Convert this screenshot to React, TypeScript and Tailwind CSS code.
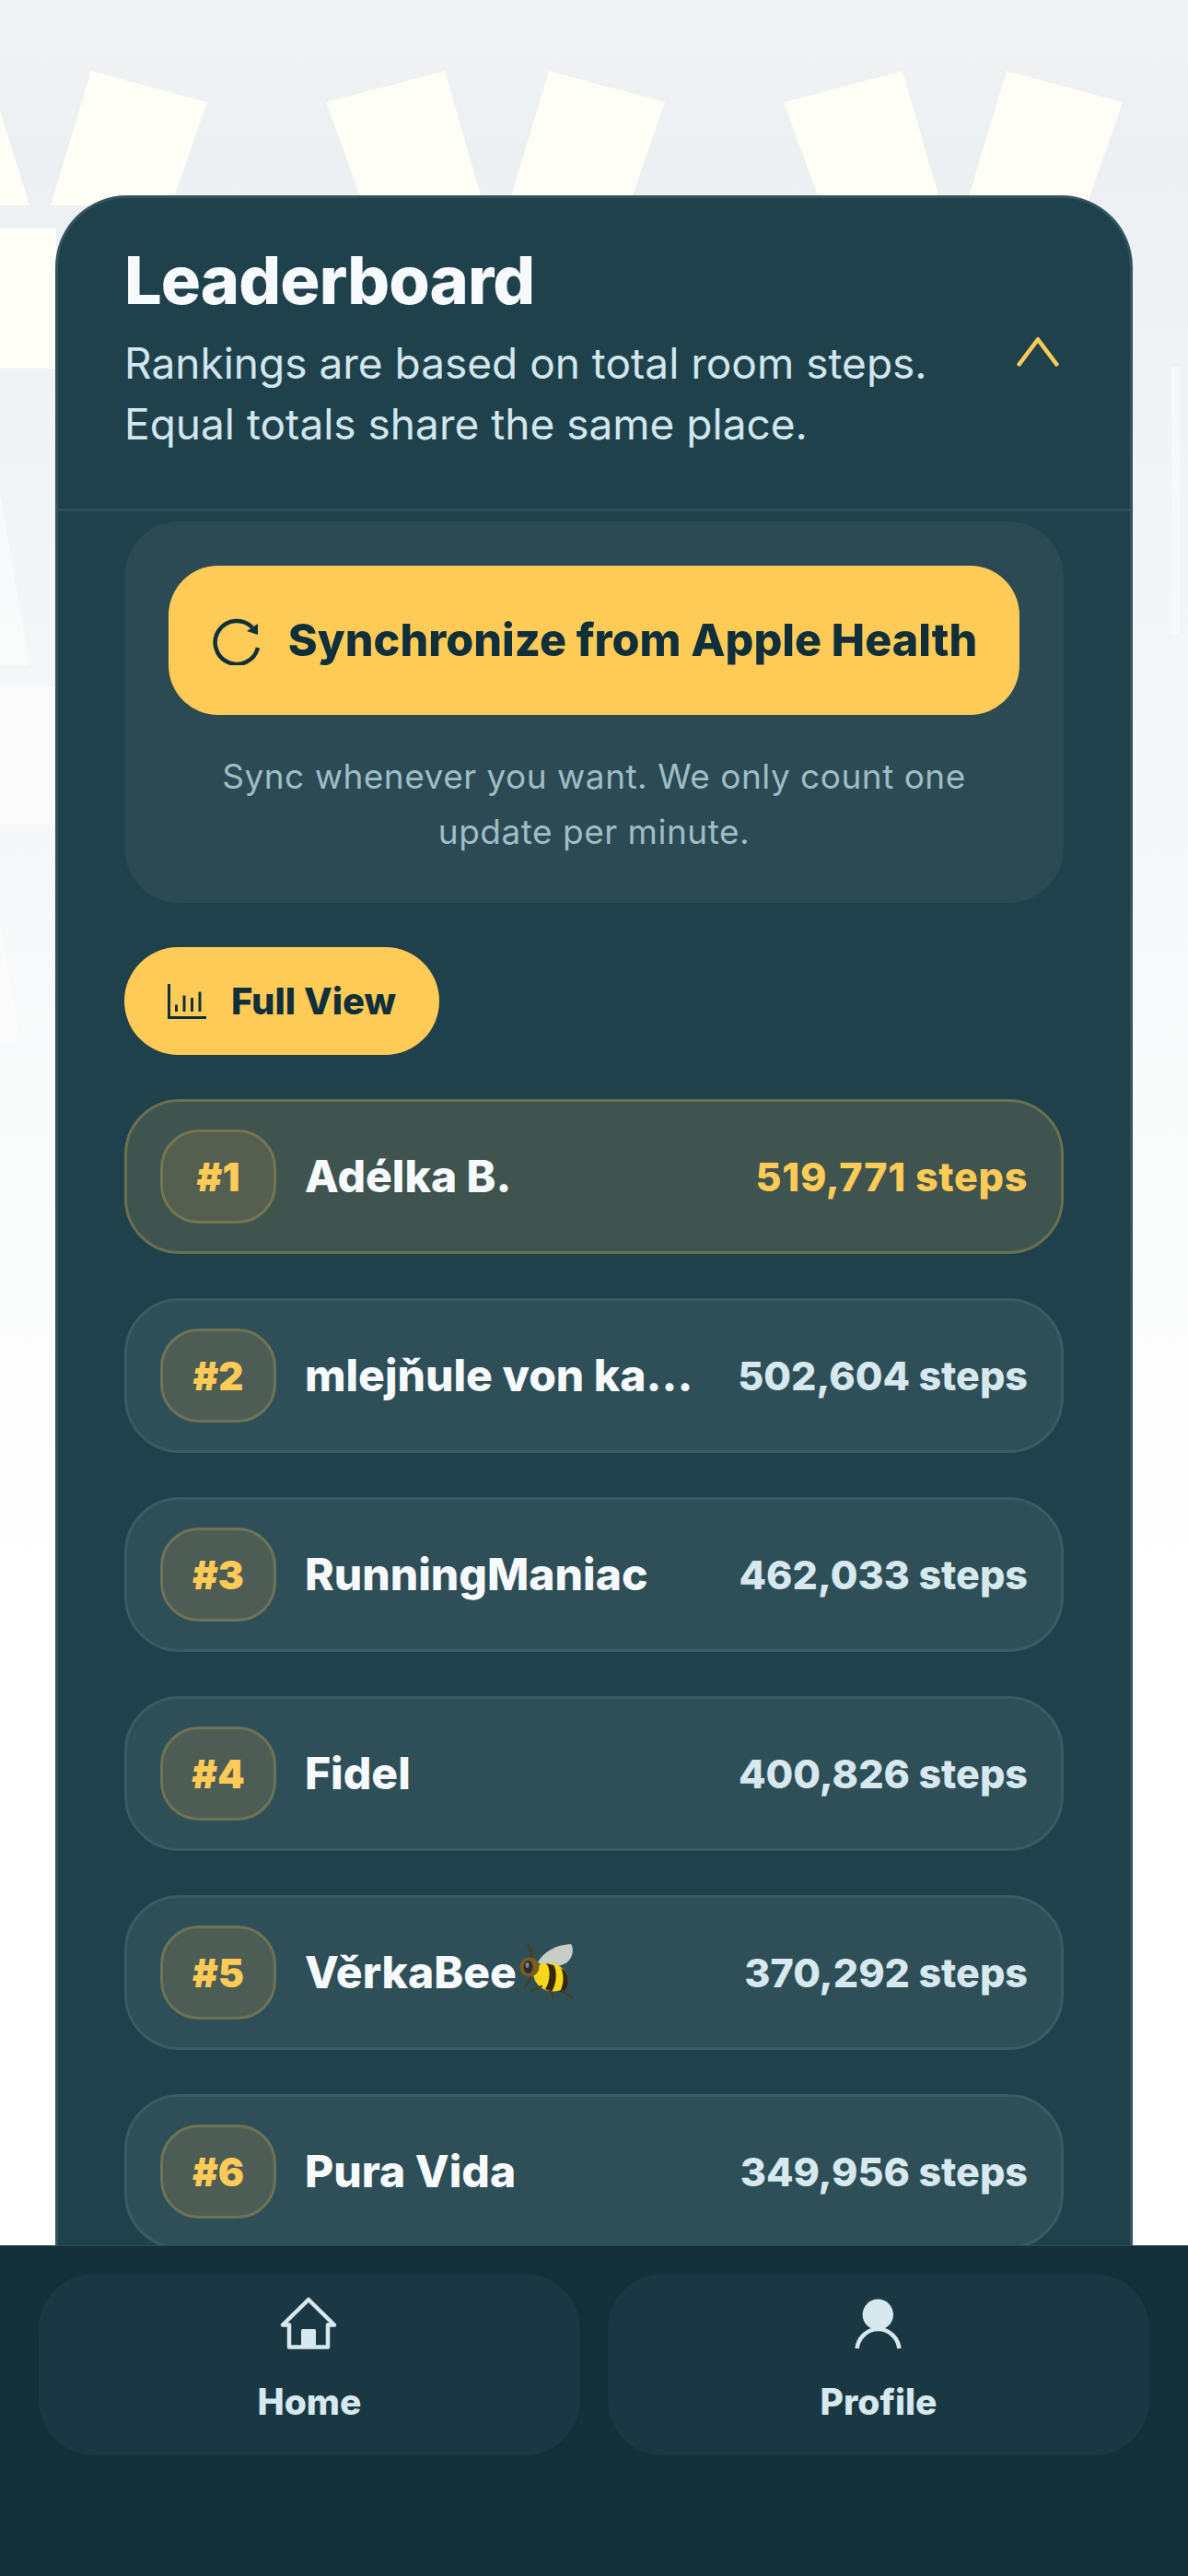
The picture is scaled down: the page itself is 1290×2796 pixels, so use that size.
import React from 'react'

interface Entry {
  rank: number;
  name: string;
  steps: string;
  bee?: boolean;
}

const entries: Entry[] = [
  { rank: 1, name: 'Adélka B.', steps: '519,771 steps' },
  { rank: 2, name: 'mlejňule von ka...', steps: '502,604 steps' },
  { rank: 3, name: 'RunningManiac', steps: '462,033 steps' },
  { rank: 4, name: 'Fidel', steps: '400,826 steps' },
  { rank: 5, name: 'VěrkaBee', steps: '370,292 steps', bee: true },
  { rank: 6, name: 'Pura Vida', steps: '349,956 steps' },
]

// page backdrop: pale pennants that fade out toward the bottom
const Backdrop = () => {
  const offsets = [0, 497, 994]
  return (
    <svg className="absolute inset-0" width="1290" height="2796" viewBox="0 0 1290 2796">
      <g fill="#fffef6">
        {offsets.map((dx) => (
          <g key={dx} transform={`translate(${dx} 0)`}>
            <polygon points="99,77 225,111 186,223 55,223" />
            <polygon points="354,111 483,77 525,223 395,223" />
          </g>
        ))}
        <polygon points="0,120 32,223 0,223" />
        <rect x="0" y="248" width="61" height="152" />
      </g>
      <g fill="#ffffff">
        <rect x="1272" y="398" width="9" height="290" opacity="0.45" />
        <polygon points="0,535 32,722 0,722" opacity="0.5" />
        <rect x="0" y="745" width="61" height="150" opacity="0.55" />
        <polygon points="0,1000 22,1130 0,1130" opacity="0.4" />
      </g>
    </svg>
  )
}

const ChevronUp = () => (
  <svg width="46" height="32" viewBox="0 0 46 32" fill="none" className="mr-[5px] -mt-[4px] shrink-0">
    <path d="M1.5 31 L23 2.5 L44.5 31" stroke="#ffcb57" strokeWidth="4.5" />
  </svg>
)

const SyncIcon = () => (
  <svg width="54" height="54" viewBox="0 0 54 54" fill="none" className="shrink-0">
    <path d="M51 35 A23.5 23.5 0 1 1 45 13" stroke="#0f2f3a" strokeWidth="4.5" />
    <polygon points="39,17 51,9 51,21" fill="#0f2f3a" />
  </svg>
)

const ChartIcon = () => (
  <svg width="42" height="38" viewBox="0 0 42 38" fill="none" className="shrink-0">
    <path d="M1.5 0 V36.5 H42" stroke="#0f2f3a" strokeWidth="3" />
    <path d="M9.5 22.5 V30 M18 12.5 V30 M26.5 15 V30 M35 8.5 V30" stroke="#0f2f3a" strokeWidth="3" />
  </svg>
)

const HomeIcon = () => (
  <svg width="66" height="62" viewBox="0 0 66 62" fill="none" className="ml-[2px]">
    <path
      d="M31 3 L3 30.5 H10 V54.5 H52 V30.5 H59 Z"
      stroke="#d7e8ee"
      strokeWidth="4.5"
      strokeLinejoin="round"
    />
    <rect x="23" y="35" width="16" height="20" rx="1.5" fill="#d7e8ee" />
  </svg>
)

const ProfileIcon = () => (
  <svg width="56" height="58" viewBox="0 0 56 58" fill="none">
    <circle cx="27.3" cy="17.3" r="16.7" fill="#d7e8ee" />
    <path d="M4.5 54 C6 42 16 33 27.5 33 C39 33 49 42 50.5 54" stroke="#d7e8ee" strokeWidth="4.5" />
  </svg>
)

const BeeEmoji = () => (
  <svg width="60" height="62" viewBox="0 0 60 62" fill="none" className="shrink-0 ml-[3px] -mt-[4px]">
    <path d="M14 18 C12 10 11 6 5 3 M14 17 C16 12 11 4 9 2" stroke="#4d3b16" strokeWidth="1.2" />
    <path d="M20 22 C26 10 40 3 56 2 C60 8 58 20 48 24 C38 28 28 28 20 22 Z" fill="#c9cdc8" />
    <ellipse cx="34" cy="38" rx="19" ry="15" transform="rotate(22 34 38)" fill="#f7d718" />
    <path d="M29 23 C34 28 34 42 28 51 L35 54 C41 44 41 30 37 25 Z" fill="#33260a" />
    <path d="M45 28 C49 36 48 46 44 54 L49 53 C54 46 54 37 49 31 Z" fill="#33260a" />
    <circle cx="11" cy="27" r="10.5" fill="#7a5e1c" />
    <ellipse cx="9.5" cy="27" rx="5" ry="7" fill="#2b2a30" />
    <ellipse cx="8.5" cy="25" rx="2" ry="3" fill="#7f8189" />
    <path
      d="M12 40 C9 44 8 47 6 48 M24 48 C20 50 16 50 13 53 M33 52 C35 54 36 57 37 60 M46 52 C48 55 52 56 57 60"
      stroke="#4d3b16"
      strokeWidth="2.2"
      strokeLinecap="round"
    />
  </svg>
)

const LeaderRow = ({ entry }: { entry: Entry }) => {
  const first = entry.rank === 1
  return (
    <div
      className={`flex items-center h-[168px] shrink-0 rounded-[60px] border-[3px] pl-[36px] pr-[36px] ${
        first ? 'bg-[#40544f] border-[#6b6f50]' : 'bg-[#2e4f57] border-[#3a5b66]'
      }`}
    >
      <div
        className={`flex items-center justify-center w-[126px] h-[102px] shrink-0 rounded-[42px] border-[3px] text-[42px] font-black text-[#ffcb57] ${
          first ? 'bg-[#555f50] border-[#75764f]' : 'bg-[#4d5d56] border-[#6f7355]'
        }`}
      >
        #{entry.rank}
      </div>
      <div className="flex items-center flex-1 min-w-0 ml-[31px] mr-[30px]">
        <span className="truncate text-[48px] font-extrabold text-[#f7fafd]">{entry.name}</span>
        {entry.bee && <BeeEmoji />}
      </div>
      <span
        className={`shrink-0 text-[43px] font-extrabold ${
          first ? 'tracking-[0.7px] text-[#ffcb57]' : 'text-[#d7e8ee]'
        }`}
      >
        {entry.steps}
      </span>
    </div>
  )
}

const App = () => {
  return (
    <div className="relative flex flex-col w-[1290px] h-[2796px] overflow-hidden font-['Inter',sans-serif] bg-[linear-gradient(180deg,#f1f3f5_0%,#edf0f2_6%,#f3f5f6_22%,#ffffff_62%)]">
      <Backdrop />

      <main className="relative flex-1 min-h-0 overflow-hidden px-[60px] pt-[212px]">
        <section className="h-[2400px] rounded-t-[78px] border-[3px] border-[#34545f] bg-[#1f414b]">
          {/* Header */}
          <header className="flex items-center justify-between h-[340px] border-b-[3px] border-[#2f505b] px-[72px]">
            <div className="mb-[16px]">
              <h1 className="text-[72px] leading-[90px] font-extrabold tracking-[-0.9px] text-[#f7fafd]">
                Leaderboard
              </h1>
              <p className="mt-[12px] text-[46px] leading-[66px] text-[#d2e6ee]">
                Rankings are based on total room steps.
                <br />
                Equal totals share the same place.
              </p>
            </div>
            <ChevronUp />
          </header>

          <div className="flex flex-col px-[72px] pt-[11px]">
            {/* Sync panel */}
            <div className="h-[414px] rounded-[60px] bg-[#2c4a53] px-[48px] pt-[48px]">
              <button className="flex items-center justify-center gap-[30px] w-full h-[162px] rounded-[54px] bg-[#ffcb57] text-[48.5px] font-extrabold text-[#0f2f3a]">
                <SyncIcon />
                Synchronize from Apple Health
              </button>
              <p className="mt-[37px] text-center text-[37px] leading-[60px] tracking-[0.5px] text-[#9ebdc6]">
                Sync whenever you want. We only count one
                <br />
                update per minute.
              </p>
            </div>

            {/* Full view toggle */}
            <button className="flex items-center gap-[27px] self-start h-[117px] mt-[48px] rounded-full bg-[#ffcb57] px-[47px] text-[40px] font-extrabold text-[#0f2f3a]">
              <ChartIcon />
              Full View
            </button>

            {/* Rows */}
            <div className="flex flex-col gap-[48px] mt-[48px]">
              {entries.map((entry) => (
                <LeaderRow key={entry.rank} entry={entry} />
              ))}
            </div>
          </div>
        </section>
      </main>

      {/* Bottom tabs */}
      <nav className="relative flex gap-[30px] h-[359px] shrink-0 border-t border-[#2a4854] bg-[#122f3a] px-[42px] pt-[30px]">
        <a className="flex flex-col items-center flex-1 h-[197px] rounded-[60px] bg-[#1a3843] pt-[25px]">
          <HomeIcon />
          <span className="mt-[28px] text-[39px] leading-[48px] font-extrabold text-[#d7e8ee]">Home</span>
        </a>
        <a className="flex flex-col items-center flex-1 h-[197px] rounded-[60px] bg-[#1a3843] pt-[27px]">
          <ProfileIcon />
          <span className="mt-[30px] text-[39px] leading-[48px] font-extrabold text-[#d7e8ee]">Profile</span>
        </a>
      </nav>
    </div>
  )
}

export default App
